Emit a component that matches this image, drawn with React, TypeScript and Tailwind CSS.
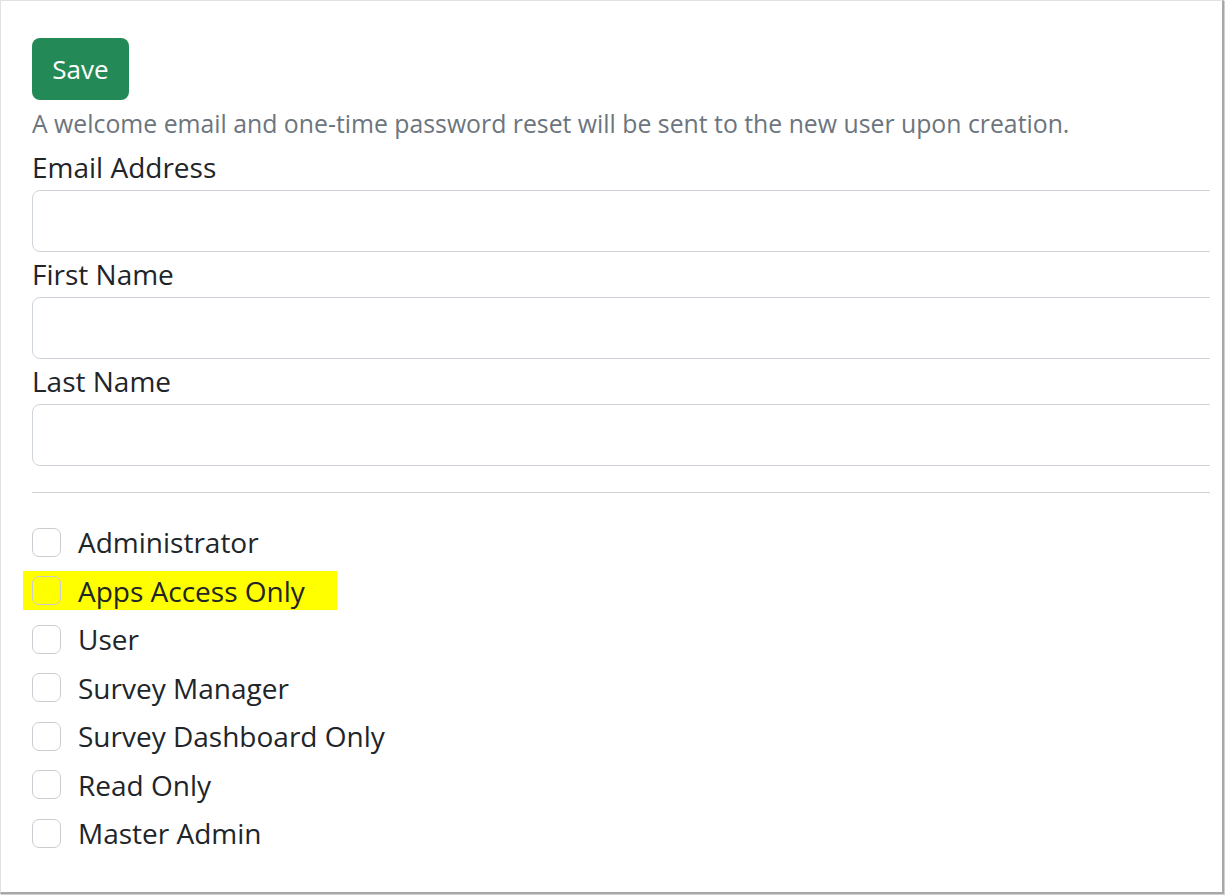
import React from "react";

const roles = [
  "Administrator",
  "Apps Access Only",
  "User",
  "Survey Manager",
  "Survey Dashboard Only",
  "Read Only",
  "Master Admin",
];

const fields = ["Email Address", "First Name", "Last Name"];

const App = () => {
  return (
    <div className="w-[1225px] h-[895px] bg-white" style={{ fontFamily: '"Open Sans", sans-serif' }}>
      <div className="w-[1224px] h-[894px] border-l border-t border-[#e2e2e2] border-r-2 border-b-2 border-r-[#a8a8a8] border-b-[#a8a8a8] shadow-[1px_1px_1px_#d0d0d0]">
        <div className="w-[1209px] overflow-hidden pl-[31px] pt-[37px]">
          <div className="w-[1240px]">
            <button
              type="button"
              className="h-[62px] w-[97px] rounded-[8px] bg-[#238a57] text-white text-[26px]"
            >
              Save
            </button>
            <p className="mt-[1px] text-[24.8px] leading-[44px] text-[#6c757d]">
              A welcome email and one-time password reset will be sent to the new user upon creation.
            </p>
            {fields.map((label) => (
              <div key={label}>
                <label className="block text-[28px] leading-[45px] text-[#212529]">{label}</label>
                <input
                  type="text"
                  className="block h-[62px] w-full rounded-[8px] border border-[#ced4da] bg-white"
                />
              </div>
            ))}
            <hr className="mt-[26px] border-t border-[#cfd1d4]" />
            <div className="pt-[25px]">
              {roles.map((role, i) => (
                <div key={role} className="h-[48.5px] flex items-center">
                  <div
                    className={
                      i === 1
                        ? "-ml-[9px] pl-[9px] pr-[32px] h-[39px] flex items-center bg-[#ffff00]"
                        : "flex items-center"
                    }
                  >
                    <span className="w-[29px] h-[29px] rounded-[7px] border border-[#c9cdd1] shrink-0" />
                    <span className="ml-[17px] text-[28px] text-[#212529]">{role}</span>
                  </div>
                </div>
              ))}
            </div>
          </div>
        </div>
      </div>
    </div>
  );
};

export default App;
